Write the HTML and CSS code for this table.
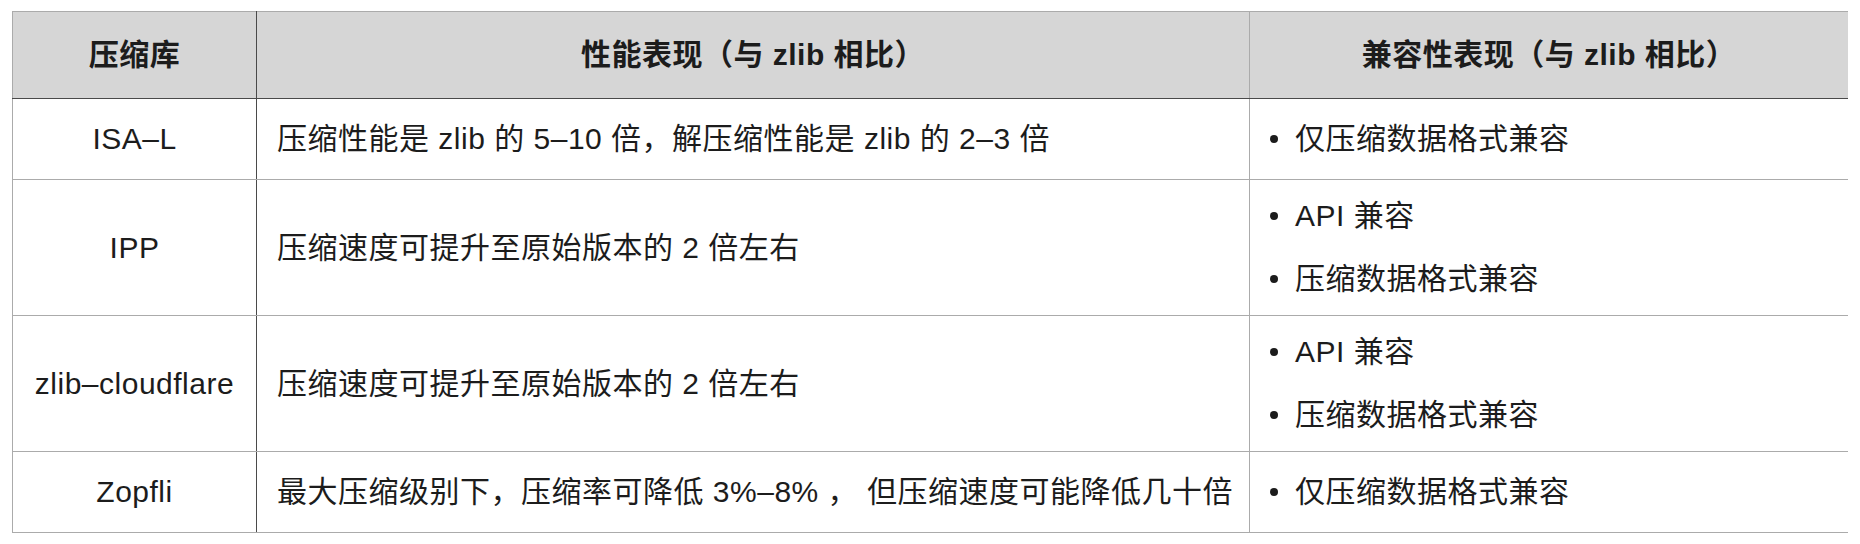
FILE: index.html
```html
<!DOCTYPE html>
<html lang="zh-CN">
<head>
<meta charset="utf-8">
<title>压缩库对比</title>
<link rel="stylesheet" href="styles.css">
</head>
<body>
<table class="cmp">
  <colgroup>
    <col class="c-name">
    <col class="c-perf">
    <col class="c-compat">
  </colgroup>
  <thead>
    <tr>
      <th class="name">压缩库</th>
      <th>性能表现（与 zlib 相比）</th>
      <th>兼容性表现（与 zlib 相比）</th>
    </tr>
  </thead>
  <tbody>
    <tr>
      <td class="name">ISA–L</td>
      <td>压缩性能是 zlib 的 5–10 倍，解压缩性能是 zlib 的 2–3 倍</td>
      <td class="compat"><ul><li>仅压缩数据格式兼容</li></ul></td>
    </tr>
    <tr>
      <td class="name">IPP</td>
      <td>压缩速度可提升至原始版本的 2 倍左右</td>
      <td class="compat"><ul><li>API 兼容</li><li>压缩数据格式兼容</li></ul></td>
    </tr>
    <tr>
      <td class="name">zlib–cloudflare</td>
      <td>压缩速度可提升至原始版本的 2 倍左右</td>
      <td class="compat"><ul><li>API 兼容</li><li>压缩数据格式兼容</li></ul></td>
    </tr>
    <tr>
      <td class="name">Zopfli</td>
      <td>最大压缩级别下，压缩率可降低 3%–8% ， 但压缩速度可能降低几十倍</td>
      <td class="compat"><ul><li>仅压缩数据格式兼容</li></ul></td>
    </tr>
  </tbody>
</table>
</body>
</html>
```

FILE: styles.css
```css
html, body {
  background: #ffffff;
}
body {
  margin: 11px 12px;
  font-family: "Liberation Sans", "Noto Sans CJK SC", sans-serif;
  font-size: 30px;
  letter-spacing: 0.5px;
  color: #1c1c1c;
}
.cmp {
  border-collapse: collapse;
  table-layout: fixed;
  width: 1836px;
}
.c-name { width: 244px; }
.c-perf { width: 993px; }
.c-compat { width: 599px; }

.cmp th, .cmp td {
  border: 1px solid #ababab;
  line-height: 42px;
  padding: 19px 20px;
  text-align: left;
  vertical-align: middle;
  white-space: nowrap;
}
.cmp th {
  background: #d6d6d6;
  font-weight: bold;
  text-align: center;
  padding: 22px 20px;
  border-bottom: 1px solid #4a4a4a;
}
.cmp .name {
  text-align: center;
  border-right: 1px solid #4a4a4a;
  padding-left: 6px;
  padding-right: 6px;
}
.cmp td.compat {
  padding-top: 15px;
  padding-bottom: 15px;
}
.compat ul {
  list-style: none;
  margin: 0;
  padding: 0;
  display: flex;
  flex-direction: column;
  gap: 21px;
}
.compat li {
  display: flex;
  align-items: center;
  gap: 17px;
}
.compat li::before {
  content: "";
  width: 8px;
  height: 8px;
  border-radius: 50%;
  background: #1c1c1c;
  flex: none;
}
```
